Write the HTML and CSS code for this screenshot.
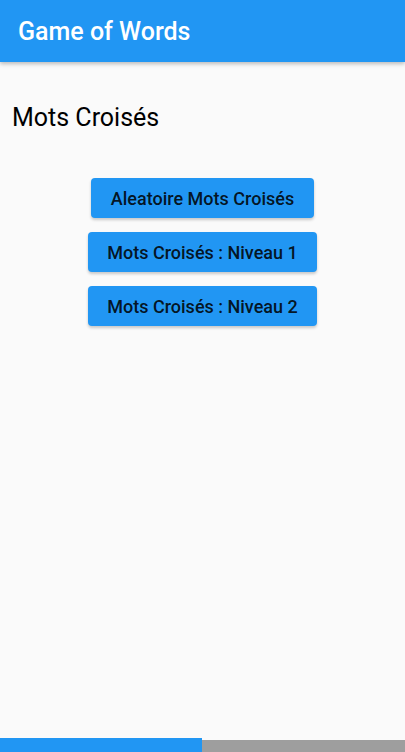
FILE: index.html
```html
<!DOCTYPE html>
<html lang="fr">
<head>
<meta charset="utf-8">
<link rel="stylesheet" href="styles.css">
</head>
<body>
<div class="app">
  <header class="appbar"><h1 class="appbar-title">Game of Words</h1></header>
  <main class="content">
    <h2 class="heading">Mots Croisés</h2>
    <div class="buttons">
      <button class="btn btn-a">Aleatoire Mots Croisés</button>
      <button class="btn">Mots Croisés : Niveau 1</button>
      <button class="btn">Mots Croisés : Niveau 2</button>
    </div>
  </main>
  <footer class="progress">
    <div class="progress-fill"></div>
    <div class="progress-rest"></div>
  </footer>
</div>
</body>
</html>
```
FILE: styles.css
```css
html, body {
  margin: 0;
  padding: 0;
  height: 100%;
  background: #fafafa;
  font-family: Roboto, "Noto Sans", sans-serif;
}
.app {
  display: flex;
  flex-direction: column;
  height: 752px;
}
.appbar {
  height: 62px;
  background: #2196f3;
  box-shadow: 0 2px 4px rgba(0,0,0,0.25);
  display: flex;
  align-items: center;
  padding: 0 18px;
  position: relative;
  z-index: 1;
}
.appbar-title {
  margin: 0;
  color: #fff;
  font-size: 25px;
  font-weight: 500;
}
.content {
  flex: 1;
  display: flex;
  flex-direction: column;
}
.heading {
  margin: 40px 0 0 12px;
  font-size: 25px;
  font-weight: 400;
  color: #000;
  line-height: 32px;
}
.buttons {
  margin-top: 44px;
  display: flex;
  flex-direction: column;
  align-items: center;
  gap: 14px;
}
.btn {
  height: 40px;
  width: 229px;
  border: none;
  border-radius: 4px;
  background: #2196f3;
  color: rgba(0,0,0,0.87);
  font-family: Roboto, "Noto Sans", sans-serif;
  font-size: 18px;
  font-weight: 500;
  box-shadow: 0 2px 3px rgba(0,0,0,0.2);
  padding: 0;
}
.btn-a {
  width: 223px;
}
.progress {
  display: flex;
  align-items: flex-end;
  height: 14px;
}
.progress-fill {
  width: 202px;
  height: 14px;
  background: #2196f3;
}
.progress-rest {
  flex: 1;
  height: 12px;
  background: #9e9e9e;
}
```
